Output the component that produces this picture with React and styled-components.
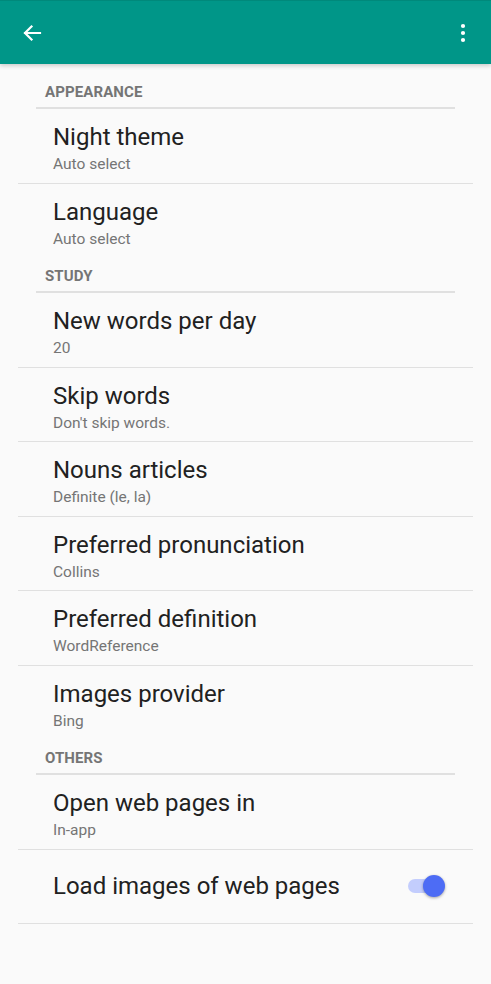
import React from "react";
import styled, { createGlobalStyle } from "styled-components";

const Global = createGlobalStyle`
  html, body { margin: 0; padding: 0; background: #fafafa; }
  body { font-family: Roboto, "Noto Sans", sans-serif; -webkit-font-smoothing: antialiased; }
`;

const Page = styled.div`
  width: 491px;
  min-height: 984px;
  background: #fafafa;
`;

const AppBar = styled.header`
  height: 64px;
  background: #009688;
  border-top: 1px solid #00897b;
  box-sizing: border-box;
  display: flex;
  align-items: center;
  justify-content: space-between;
  padding: 0 16px 0 20px;
  box-shadow: 0 2px 4px rgba(0, 0, 0, 0.18);
  position: relative;
`;

const IconButton = styled.div`
  width: 24px;
  height: 24px;
  display: flex;
  align-items: center;
  justify-content: center;
`;

const List = styled.main`
  padding-top: 10px;
`;

const SectionHeader = styled.div`
  margin: 0 36px;
  height: 35px;
  box-sizing: border-box;
  border-bottom: 2px solid #e0e0e0;
  padding: 9px 0 0 9px;
  font-size: 15px;
  font-weight: 700;
  color: #757575;
  letter-spacing: 0.1px;
  line-height: 18px;
`;

const Item = styled.div`
  margin: 0 18px;
  height: 74.5px;
  box-sizing: border-box;
  border-bottom: ${(p) => (p.$divider ? "1px solid #e0e0e0" : "none")};
  display: flex;
  align-items: ${(p) => (p.$single ? "center" : "flex-start")};
  padding: ${(p) => (p.$single ? "0" : "14px")} 33px 0 35px;
`;

const Texts = styled.div`
  flex: 1;
  display: flex;
  flex-direction: column;
`;

const Title = styled.div`
  font-size: 24px;
  color: #212121;
  line-height: 28px;
`;

const Subtitle = styled.div`
  font-size: 15.5px;
  color: #757575;
  line-height: 20px;
  margin-top: 3px;
`;

const SwitchTrack = styled.div`
  width: 32px;
  height: 14px;
  border-radius: 7px;
  background: #c3cdfd;
  position: relative;
`;

const SwitchThumb = styled.div`
  position: absolute;
  width: 22px;
  height: 22px;
  border-radius: 50%;
  background: #4d6cf5;
  top: -4px;
  right: -5px;
  box-shadow: 0 1px 3px rgba(0, 0, 0, 0.35);
`;

const sections = [
  {
    header: "APPEARANCE",
    items: [
      { title: "Night theme", sub: "Auto select" },
      { title: "Language", sub: "Auto select" },
    ],
  },
  {
    header: "STUDY",
    items: [
      { title: "New words per day", sub: "20" },
      { title: "Skip words", sub: "Don't skip words." },
      { title: "Nouns articles", sub: "Definite (le, la)" },
      { title: "Preferred pronunciation", sub: "Collins" },
      { title: "Preferred definition", sub: "WordReference" },
      { title: "Images provider", sub: "Bing" },
    ],
  },
  {
    header: "OTHERS",
    items: [
      { title: "Open web pages in", sub: "In-app" },
      { title: "Load images of web pages", toggle: true, last: true },
    ],
  },
];

export default function App() {
  return (
    <Page>
      <Global />
      <AppBar>
        <IconButton>
          <svg width="20" height="20" viewBox="0 0 20 20" fill="none" stroke="#fff" strokeWidth="2.2" strokeLinecap="square">
            <path d="M18 10H3M9.5 3.5L3 10l6.5 6.5" />
          </svg>
        </IconButton>
        <IconButton>
          <svg width="6" height="20" viewBox="0 0 6 20" fill="#fff">
            <circle cx="3" cy="3" r="2.1" />
            <circle cx="3" cy="10" r="2.1" />
            <circle cx="3" cy="17" r="2.1" />
          </svg>
        </IconButton>
      </AppBar>
      <List>
        {sections.map((s) => (
          <React.Fragment key={s.header}>
            <SectionHeader>{s.header}</SectionHeader>
            {s.items.map((it, i) => (
              <Item
                key={it.title}
                $divider={i < s.items.length - 1 || it.last}
                $single={!it.sub}
              >
                <Texts>
                  <Title>{it.title}</Title>
                  {it.sub && <Subtitle>{it.sub}</Subtitle>}
                </Texts>
                {it.toggle && (
                  <SwitchTrack>
                    <SwitchThumb />
                  </SwitchTrack>
                )}
              </Item>
            ))}
          </React.Fragment>
        ))}
      </List>
    </Page>
  );
}
